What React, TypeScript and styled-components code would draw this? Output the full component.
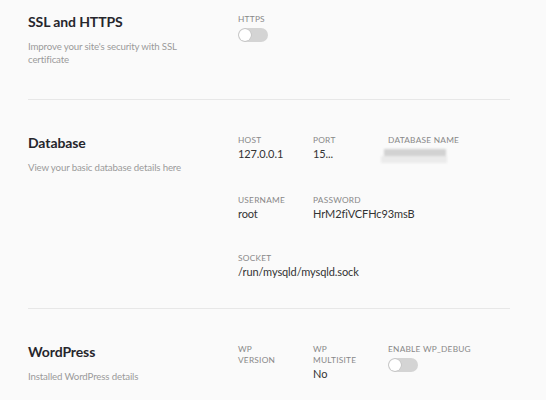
import styled, { createGlobalStyle } from "styled-components"

const GlobalStyle = createGlobalStyle`
  body {
    margin: 0;
    background: #fafafa;
    font-family: Lato, "Open Sans", sans-serif;
  }
`

type Field = {
  label: string
  value?: string
  toggle?: boolean
  blurred?: boolean
}

type SettingsSection = {
  title: string
  description: string
  rows: Field[][]
}

const sections: SettingsSection[] = [
  {
    title: "SSL and HTTPS",
    description: "Improve your site's security with SSL certificate",
    rows: [[{ label: "HTTPS", toggle: true }]],
  },
  {
    title: "Database",
    description: "View your basic database details here",
    rows: [
      [
        { label: "Host", value: "127.0.0.1" },
        { label: "Port", value: "15..." },
        { label: "Database name", blurred: true },
      ],
      [
        { label: "Username", value: "root" },
        { label: "Password", value: "HrM2fiVCFHc93msB" },
      ],
      [{ label: "Socket", value: "/run/mysqld/mysqld.sock" }],
    ],
  },
  {
    title: "WordPress",
    description: "Installed WordPress details",
    rows: [
      [
        { label: "WP Version" },
        { label: "WP Multisite", value: "No" },
        { label: "Enable WP_DEBUG", toggle: true },
      ],
    ],
  },
]

const App = () => {
  return (
    <>
      <GlobalStyle />
      <Page>
        {sections.map((section, index) => (
          <Section key={section.title} $first={index === 0}>
            <Intro>
              <Title>{section.title}</Title>
              <Description>{section.description}</Description>
            </Intro>
            <Fields>
              {section.rows.map((row, r) => (
                <FieldRow key={r}>
                  {row.map((field, i) => (
                    <FieldBox key={field.label}>
                      <Label $wrap={i < 2 && row.length > 2}>{field.label}</Label>
                      {field.value && <Value>{field.value}</Value>}
                      {field.blurred && (
                        <Blur>
                          <BlurBar $w={62} $offset={3} $shade="#d2d2d2" />
                          <BlurBar $w={66} $offset={0} $shade="#ebebeb" />
                        </Blur>
                      )}
                      {field.toggle && (
                        <Toggle>
                          <Knob />
                        </Toggle>
                      )}
                    </FieldBox>
                  ))}
                </FieldRow>
              ))}
            </Fields>
          </Section>
        ))}
      </Page>
    </>
  )
}

const Page = styled.div`
  width: 482px;
  margin-left: 28px;
`

const Section = styled.section<{ $first?: boolean }>`
  display: grid;
  grid-template-columns: 210px 1fr;
  padding: ${(p) => (p.$first ? "12px 0 33px" : "33px 0 29px")};
  border-bottom: 1px solid #e7e7e7;
`

const Intro = styled.div`
  display: flex;
  flex-direction: column;
`

const Title = styled.h2`
  margin: 0;
  font-size: 14px;
  line-height: 20px;
  font-weight: 700;
  letter-spacing: -0.1px;
  color: #26262c;
`

const Description = styled.p`
  margin: 8px 0 0;
  width: 165px;
  font-size: 9.7px;
  line-height: 13px;
  letter-spacing: -0.15px;
  color: #9a9a9a;
`

const Fields = styled.div`
  display: flex;
  flex-direction: column;
  gap: 32px;
  padding-top: 2px;
`

const FieldRow = styled.div`
  display: flex;
`

const FieldBox = styled.div`
  width: 75px;
  display: flex;
  flex-direction: column;
  align-items: flex-start;
  flex-shrink: 0;
`

const Label = styled.div<{ $wrap?: boolean }>`
  font-size: 8.3px;
  line-height: 11px;
  text-transform: uppercase;
  letter-spacing: 0.25px;
  color: #888;
  max-width: ${(p) => (p.$wrap ? "46px" : "none")};
  white-space: ${(p) => (p.$wrap ? "normal" : "nowrap")};
`

const Value = styled.div`
  margin-top: 1px;
  font-size: 11px;
  line-height: 14px;
  letter-spacing: -0.1px;
  color: #333;
  white-space: nowrap;
`

const Blur = styled.div`
  margin: 3px 0 0 -7px;
  display: flex;
  flex-direction: column;
  filter: blur(1.2px);
`

const BlurBar = styled.div<{ $w: number; $offset: number; $shade: string }>`
  width: ${(p) => p.$w}px;
  margin-left: ${(p) => p.$offset}px;
  height: 7px;
  background: ${(p) => p.$shade};
`

const Toggle = styled.div`
  margin-top: 3px;
  width: 30px;
  height: 14px;
  border-radius: 7px;
  background: #d4d4d4;
  display: flex;
  align-items: center;
  padding: 0 1px;
  box-sizing: border-box;
`

const Knob = styled.div`
  width: 12px;
  height: 12px;
  border-radius: 50%;
  background: #fff;
  box-shadow: 0 0 0 0.5px #b8b8b8;
`

export default App
